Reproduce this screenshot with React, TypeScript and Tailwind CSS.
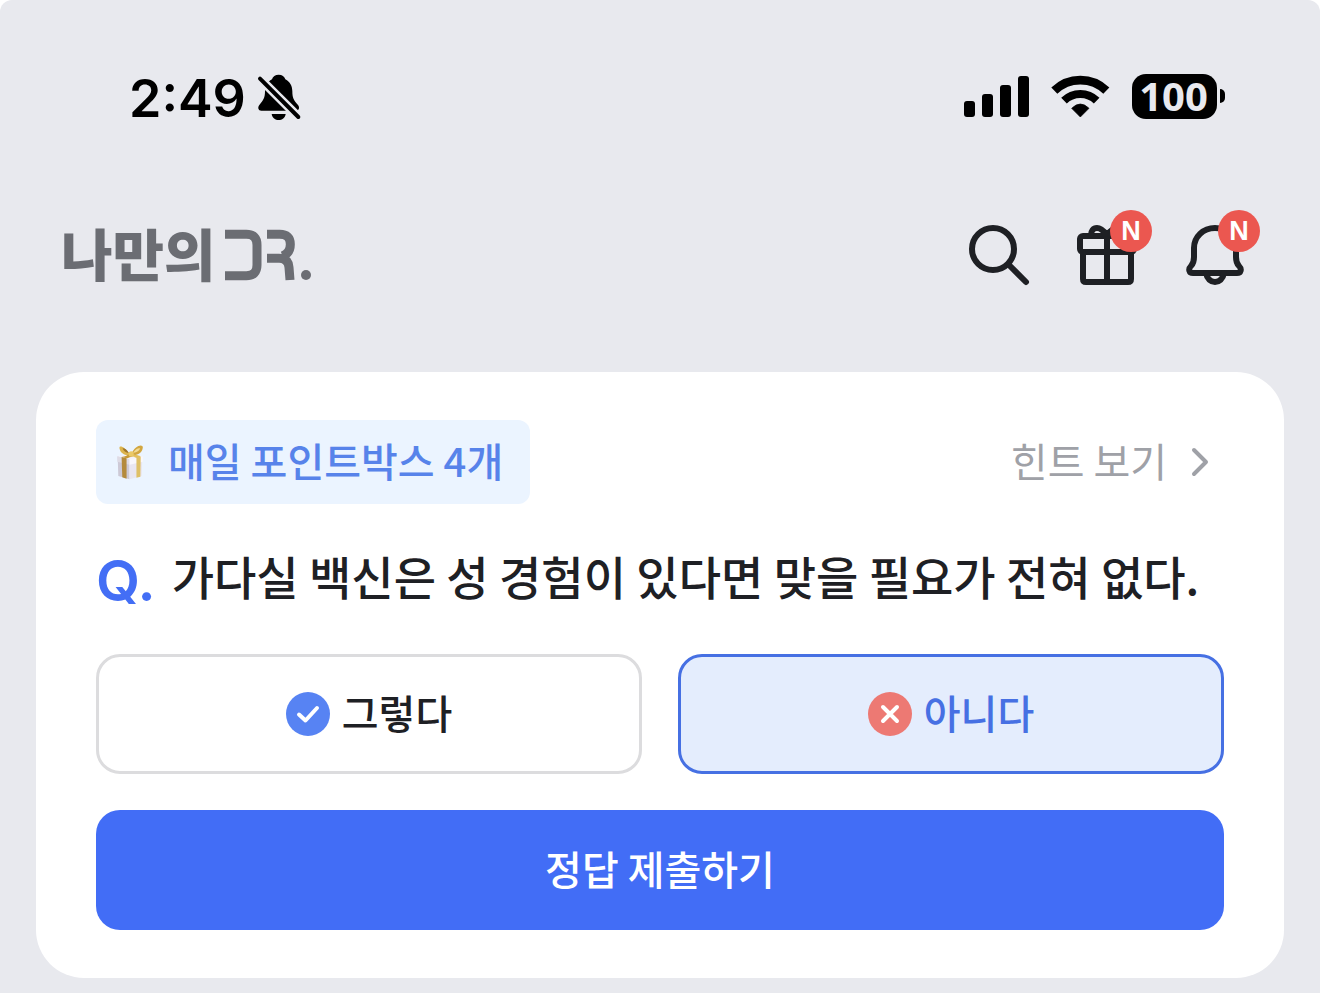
import { useState } from "react";
import type { ReactNode } from "react";

const BATTERY = 100;

const answers = [
  { id: "yes", label: "그렇다", icon: <CheckMark /> },
  { id: "no", label: "아니다", icon: <CrossMark /> },
];

function CheckMark() {
  return (
    <svg viewBox="0 0 44 44" className="size-11 shrink-0" fill="none" aria-hidden="true">
      <circle cx="22" cy="22" r="22" fill="#5783f3" />
      <path d="M13 22.5L19.5 28.5L31 16" stroke="#fff" strokeWidth="4" strokeLinecap="round" strokeLinejoin="round" />
    </svg>
  );
}

function CrossMark() {
  return (
    <svg viewBox="0 0 44 44" className="size-11 shrink-0" fill="none" aria-hidden="true">
      <circle cx="22" cy="22" r="22" fill="#ed7973" />
      <path d="M15 15L29 29M29 15L15 29" stroke="#fff" strokeWidth="4" strokeLinecap="round" />
    </svg>
  );
}

function SilentBell() {
  return (
    <svg viewBox="440 40 141 150" className="h-[50px] w-[47px]" fill="none" aria-hidden="true">
      <path
        d="M508 45c-10 0-18 5-20 14C474 66 467 80 467 95C467 115 462 122 450 136C444 144 447 153 456 153H560C569 153 572 144 566 136C553 122 549 115 549 95C549 80 542 66 528 59C526 50 518 45 508 45Z"
        fill="#000"
      />
      <path d="M487 163H529C527 175 518 181 508 181S489 175 487 163Z" fill="#000" />
      <path d="M444 49L580 185" stroke="#e8e9ee" strokeWidth="27" />
      <path d="M452 57L567 172" stroke="#000" strokeWidth="12" strokeLinecap="round" />
    </svg>
  );
}

function StatusBar() {
  return (
    <div className="flex h-12 items-center justify-between pr-[95px] pl-[129px] text-black">
      <div className="flex items-center gap-[10px] pt-1">
        <span className="pt-px font-['Inter',sans-serif] text-[52px] leading-none font-semibold">2:49</span>
        <SilentBell />
      </div>
      <div className="flex items-center gap-[22px]">
        <div className="flex items-end gap-[7px]" role="img" aria-label="신호 강도">
          <span className="h-4 w-[11px] rounded-[3px] bg-black" />
          <span className="h-[23px] w-[11px] rounded-[3px] bg-black" />
          <span className="h-8 w-[11px] rounded-[3px] bg-black" />
          <span className="h-[41px] w-[11px] rounded-[3px] bg-black" />
        </div>
        <svg viewBox="303 42 177 132" className="h-11 w-[59px]" fill="none" aria-hidden="true">
          <path d="M313 92A112 112 0 0 1 469 92" stroke="#000" strokeWidth="26" />
          <path d="M342 122A70 70 0 0 1 440 122" stroke="#000" strokeWidth="24" />
          <path d="M391 171L365 145Q391 119 417 145Z" fill="#000" stroke="#000" strokeWidth="2" strokeLinejoin="round" />
        </svg>
        <div className="flex items-center gap-[3px]">
          <span className="flex h-[45px] w-[85px] items-center justify-center rounded-[14px] bg-black pr-0.5 font-['Open_Sans',sans-serif] text-[40px] leading-none font-bold text-[#e8e9ee]">
            {BATTERY}
          </span>
          <span className="h-[14px] w-[5px] rounded-r-full bg-black" />
        </div>
      </div>
    </div>
  );
}

function Logo() {
  return (
    <a href="#" className="flex items-center gap-2 text-[#6b6d73]" aria-label="나만의 DR.">
      <span className="pb-1.5 text-[56px] leading-none font-black">나만의</span>
      <svg viewBox="525 48 264 174" className="h-[58px] w-[88px]" fill="none" stroke="currentColor" strokeWidth="27" aria-hidden="true">
        <path d="M528 73H592Q624 73 624 105V165Q624 197 592 197H528" />
        <path d="M654 73H692Q724 73 724 103Q724 130 700 138" />
        <path d="M654 145H690Q718 145 720 172L723 210" />
        <circle cx="771" cy="195" r="15" fill="currentColor" stroke="none" />
      </svg>
    </a>
  );
}

function HeaderButton({ label, isNew, children }: { label: string; isNew?: boolean; children: ReactNode }) {
  return (
    <button type="button" aria-label={label} className="relative size-[72px] cursor-pointer">
      <svg
        viewBox="0 0 72 72"
        className="size-full"
        fill="none"
        stroke="#1e2024"
        strokeWidth="6"
        strokeLinecap="round"
        strokeLinejoin="round"
      >
        {children}
      </svg>
      {isNew && (
        <span className="absolute -top-[9px] -right-[9px] flex size-[42px] items-center justify-center rounded-full bg-[#eb5750] font-['Liberation_Sans',sans-serif] text-[27px] leading-none font-bold text-white">
          N
        </span>
      )}
    </button>
  );
}

function Header() {
  return (
    <header className="flex items-center justify-between pr-[69px] pl-[61px]">
      <Logo />
      <nav className="flex gap-9">
        <HeaderButton label="검색">
          <circle cx="30" cy="30" r="21" />
          <path d="M46 46L63 63" />
        </HeaderButton>
        <HeaderButton label="선물" isNew>
          <rect x="9" y="17" width="54" height="16" rx="3" />
          <path d="M12 33V60Q12 63 15 63H57Q60 63 60 60V33" />
          <path d="M36 17V63" />
          <path d="M36 16C32 11 29 9 26 9C22 9 20 12 20 16M36 16C40 11 43 9 46 9C50 9 52 12 52 16" />
        </HeaderButton>
        <HeaderButton label="알림" isNew>
          <path d="M36 9C24 9 15 18 15 29V38C15 42 14 45 12 47C9 50 10 54 14 54H58C62 54 63 50 60 47C58 45 57 42 57 38V29C57 18 48 9 36 9Z" />
          <path d="M27 54C28 60 32 63 36 63S44 60 45 54" />
        </HeaderButton>
      </nav>
    </header>
  );
}

function GiftBox() {
  return (
    <svg viewBox="112 117 82 106" className="h-[35px] w-[27px]" aria-hidden="true">
      <path d="M114 152L150 160V221L116 211Z" fill="#cdc9d6" />
      <path d="M150 160L189 151L187 211L150 221Z" fill="#e9e6f0" />
      <path d="M113 151L152 144L191 151L150 162Z" fill="#f4f2f8" />
      <path d="M113 151L150 160V177L113 168Z" fill="#dedbe5" />
      <path d="M150 160L191 151V168L150 177Z" fill="#f8f7fb" />
      <path d="M126 153L141 157V219L128 215Z" fill="#b48a3c" />
      <path d="M171 156L184 152L183 213L171 216Z" fill="#dfc066" />
      <path d="M126 153L163 145L171 148L141 157Z" fill="#c79d45" />
      <path d="M150 147L171 156L184 152L160 145Z" fill="#e6cb7c" />
      <path d="M153 147C132 117 116 116 120 129C123 143 137 149 153 149Z" fill="#dcb44e" />
      <path d="M154 147C167 115 194 112 190 127C188 143 170 150 154 149Z" fill="#d2a640" />
      <path d="M148 141C141 130 134 126 129 127C131 135 139 141 148 141Z" fill="#9d742b" />
      <path d="M161 140C168 129 177 125 182 127C180 135 170 141 161 140Z" fill="#f3db93" />
      <path d="M150 143L134 155L144 157L155 147Z" fill="#c89a37" />
      <path d="M158 144L183 150L176 157L155 147Z" fill="#e3be59" />
      <circle cx="155" cy="144" r="8" fill="#ebc966" />
    </svg>
  );
}

function QuizCard() {
  const [selected, setSelected] = useState("no");

  return (
    <main className="mx-9 rounded-[48px] bg-white px-[60px] py-12">
      <div className="flex items-center justify-between">
        <div className="flex h-[84px] items-center gap-6 rounded-xl bg-[#ebf4ff] pr-[27px] pl-[21px] text-[#5783ea]">
          <GiftBox />
          <span className="pb-1 text-[40px] leading-none font-medium">매일 포인트박스 4개</span>
        </div>
        <a href="#" className="flex items-center gap-6 pr-[15px] text-[40px] leading-none text-[#9fa1a7]">
          <span className="pb-1">힌트 보기</span>
          <svg viewBox="0 0 18 30" className="h-[30px] w-[18px]" fill="none" aria-hidden="true">
            <path d="M3 3L15 15L3 27" stroke="currentColor" strokeWidth="4" strokeLinecap="round" strokeLinejoin="round" />
          </svg>
        </a>
      </div>

      <h1 className="my-11 flex items-center gap-4 text-[46px] leading-[62px] font-medium whitespace-nowrap text-[#1e2024]">
        <span className="pt-1 font-['Inter',sans-serif] text-[57px] leading-[58px] font-semibold text-[#436ef5]">Q.</span>
        <span className="pb-2 leading-[54px]">가다실 백신은 성 경험이 있다면 맞을 필요가 전혀 없다.</span>
      </h1>

      <div className="grid grid-cols-2 gap-9">
        {answers.map((a) => (
          <button
            key={a.id}
            type="button"
            aria-pressed={selected === a.id}
            onClick={() => setSelected(a.id)}
            className={`flex h-[120px] cursor-pointer items-center justify-center gap-3 rounded-3xl border-[3px] text-[40px] leading-none font-medium ${
              selected === a.id
                ? "border-[#4670e3] bg-[#e4edfd] text-[#4670e3]"
                : "border-[#dcdcde] bg-white text-[#1e2024]"
            }`}
          >
            {a.icon}
            <span className="pb-1">{a.label}</span>
          </button>
        ))}
      </div>

      <button
        type="button"
        className="mt-9 flex h-[120px] w-full cursor-pointer items-center justify-center rounded-3xl bg-[#426df6] pb-1 text-[40px] leading-none font-medium text-white"
      >
        정답 제출하기
      </button>
    </main>
  );
}

export default function App() {
  return (
    <div className="min-h-screen bg-white font-['Noto_Sans_CJK_KR',sans-serif]">
      <div className="flex min-h-screen flex-col rounded-t-xl bg-[#e8e9ee] pt-[72px] pb-4">
        <StatusBar />
        <div className="mt-[99px] mb-[81px]">
          <Header />
        </div>
        <QuizCard />
      </div>
    </div>
  );
}
